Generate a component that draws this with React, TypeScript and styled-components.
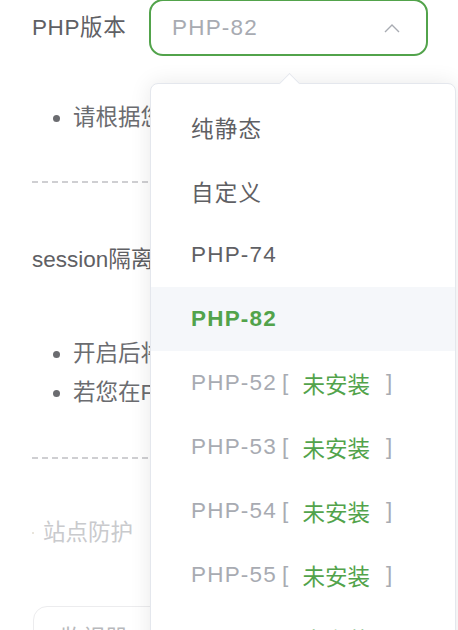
import styled, { createGlobalStyle } from 'styled-components'

const GlobalStyle = createGlobalStyle`
    html, body {
        margin: 0;
        padding: 0;
        background: #ffffff;
        overflow: hidden;
    }
    body {
        font-family: "Liberation Sans", "Noto Sans CJK SC", sans-serif;
        color: #606266;
    }
`

const green = '#52a34b'

const Page = styled.div`
    position: relative;
    width: 458px;
    height: 630px;
    overflow: hidden;
    padding-left: 32px;
    box-sizing: border-box;
`

const FormRow = styled.div`
    display: flex;
    align-items: center;
    height: 56px;
`

const Label = styled.div`
    width: 117px;
    font-size: 22.5px;
    letter-spacing: 0.6px;
    color: #5f6064;
    line-height: 56px;
    white-space: nowrap;
`

const SelectBox = styled.div`
    box-sizing: border-box;
    width: 279px;
    height: 57px;
    margin-top: -1px;
    border: 2px solid ${green};
    border-radius: 14px;
    display: flex;
    align-items: center;
    justify-content: space-between;
    padding: 0 26px 0 21px;
`

const Placeholder = styled.span`
    font-size: 22.5px;
    letter-spacing: 1.2px;
    color: #a8abb2;
`

const TipList = styled.ul<{ $top: number }>`
    margin: ${p => p.$top}px 0 0 0;
    padding: 0 0 0 41px;
    width: 340px;
    overflow: hidden;
    list-style: disc;
    color: #6b6c70;
    font-size: 22.5px;
    line-height: 39px;
    white-space: nowrap;
    li::marker {
        color: #6b6c70;
    }
`

const Divider = styled.div<{ $top: number }>`
    margin-top: ${p => p.$top}px;
    height: 2px;
    width: 420px;
    background: repeating-linear-gradient(90deg, #cfcfd2 0 6px, transparent 6px 10px);
`

const SectionTitle = styled.div<{ $top: number; $muted?: boolean }>`
    margin-top: ${p => p.$top}px;
    font-size: 22.5px;
    line-height: 30px;
    white-space: nowrap;
    color: ${p => (p.$muted ? '#c9cacd' : '#5f6064')};
    display: flex;
    align-items: center;
    gap: 9px;
`

const Dot = styled.span`
    width: 2px;
    height: 2px;
    border-radius: 50%;
    background: #e2ddd0;
`

const MonitorBox = styled.div`
    margin-top: 58px;
    margin-left: 1px;
    width: 150px;
    height: 60px;
    border: 1px solid #ececee;
    border-radius: 14px;
    box-sizing: border-box;
    padding: 13px 0 0 26px;
    font-size: 22.5px;
    color: #b8b9bc;
    white-space: nowrap;
`

const Dropdown = styled.div`
    position: absolute;
    left: 150px;
    top: 83px;
    width: 306px;
    height: 600px;
    background: #ffffff;
    border: 1px solid #e4e7ed;
    border-radius: 8px;
    box-shadow: 0 0 22px rgba(0, 0, 0, 0.09);
    box-sizing: border-box;
    padding-top: 11px;
`

const Arrow = styled.div`
    position: absolute;
    left: 131px;
    top: -8px;
    width: 14px;
    height: 14px;
    background: #ffffff;
    border-top: 1px solid #e4e7ed;
    border-left: 1px solid #e4e7ed;
    transform: rotate(45deg);
`

const Option = styled.div<{ $selected?: boolean; $disabled?: boolean }>`
    height: 64px;
    display: flex;
    align-items: center;
    padding-left: 40px;
    font-size: 22.5px;
    letter-spacing: 1.2px;
    font-weight: ${p => (p.$selected ? 700 : 400)};
    color: ${p => (p.$selected ? green : p.$disabled ? '#a8abb2' : '#5f6064')};
    background: ${p => (p.$selected ? '#f5f7fa' : 'transparent')};
    white-space: nowrap;
`

const Bracket = styled.span<{ $close?: boolean }>`
    color: #a8abb2;
    margin: ${p => (p.$close ? '0 0 0 16px' : '0 13px 0 5px')};
`

const NotInstalled = styled.span`
    color: ${green};
    letter-spacing: 0;
`

const ChevronUp = () => (
    <svg width="16" height="10" viewBox="0 0 16 10" fill="none">
        <path d="M1 9 L8 2 L15 9" stroke="#a8abb2" strokeWidth="1.4" />
    </svg>
)

const options = [
    { label: '纯静态' },
    { label: '自定义' },
    { label: 'PHP-74' },
    { label: 'PHP-82', selected: true },
    { label: 'PHP-52', missing: true },
    { label: 'PHP-53', missing: true },
    { label: 'PHP-54', missing: true },
    { label: 'PHP-55', missing: true },
    { label: 'PHP-56', missing: true },
]

const App = () => {
    return <>
        <GlobalStyle />
        <Page>
            <FormRow>
                <Label>PHP版本</Label>
                <SelectBox>
                    <Placeholder>PHP-82</Placeholder>
                    <ChevronUp />
                </SelectBox>
            </FormRow>
            <TipList $top={42}>
                <li>请根据您的程序需求选择版本</li>
            </TipList>
            <Divider $top={44} />
            <SectionTitle $top={62}>session隔离</SectionTitle>
            <TipList $top={59}>
                <li>开启后将会把session文件存放到独立文件夹</li>
                <li>若您在PHP配置中已修改session存储方式</li>
            </TipList>
            <Divider $top={45} />
            <SectionTitle $top={59} $muted><Dot />站点防护</SectionTitle>
            <MonitorBox>监视器</MonitorBox>

            <Dropdown>
                <Arrow />
                {options.map(o => (
                    <Option key={o.label} $selected={o.selected} $disabled={o.missing}>
                        {o.label}
                        {o.missing && <>
                            <Bracket>[</Bracket>
                            <NotInstalled>未安装</NotInstalled>
                            <Bracket $close>]</Bracket>
                        </>}
                    </Option>
                ))}
            </Dropdown>
        </Page>
    </>
}

export default App
